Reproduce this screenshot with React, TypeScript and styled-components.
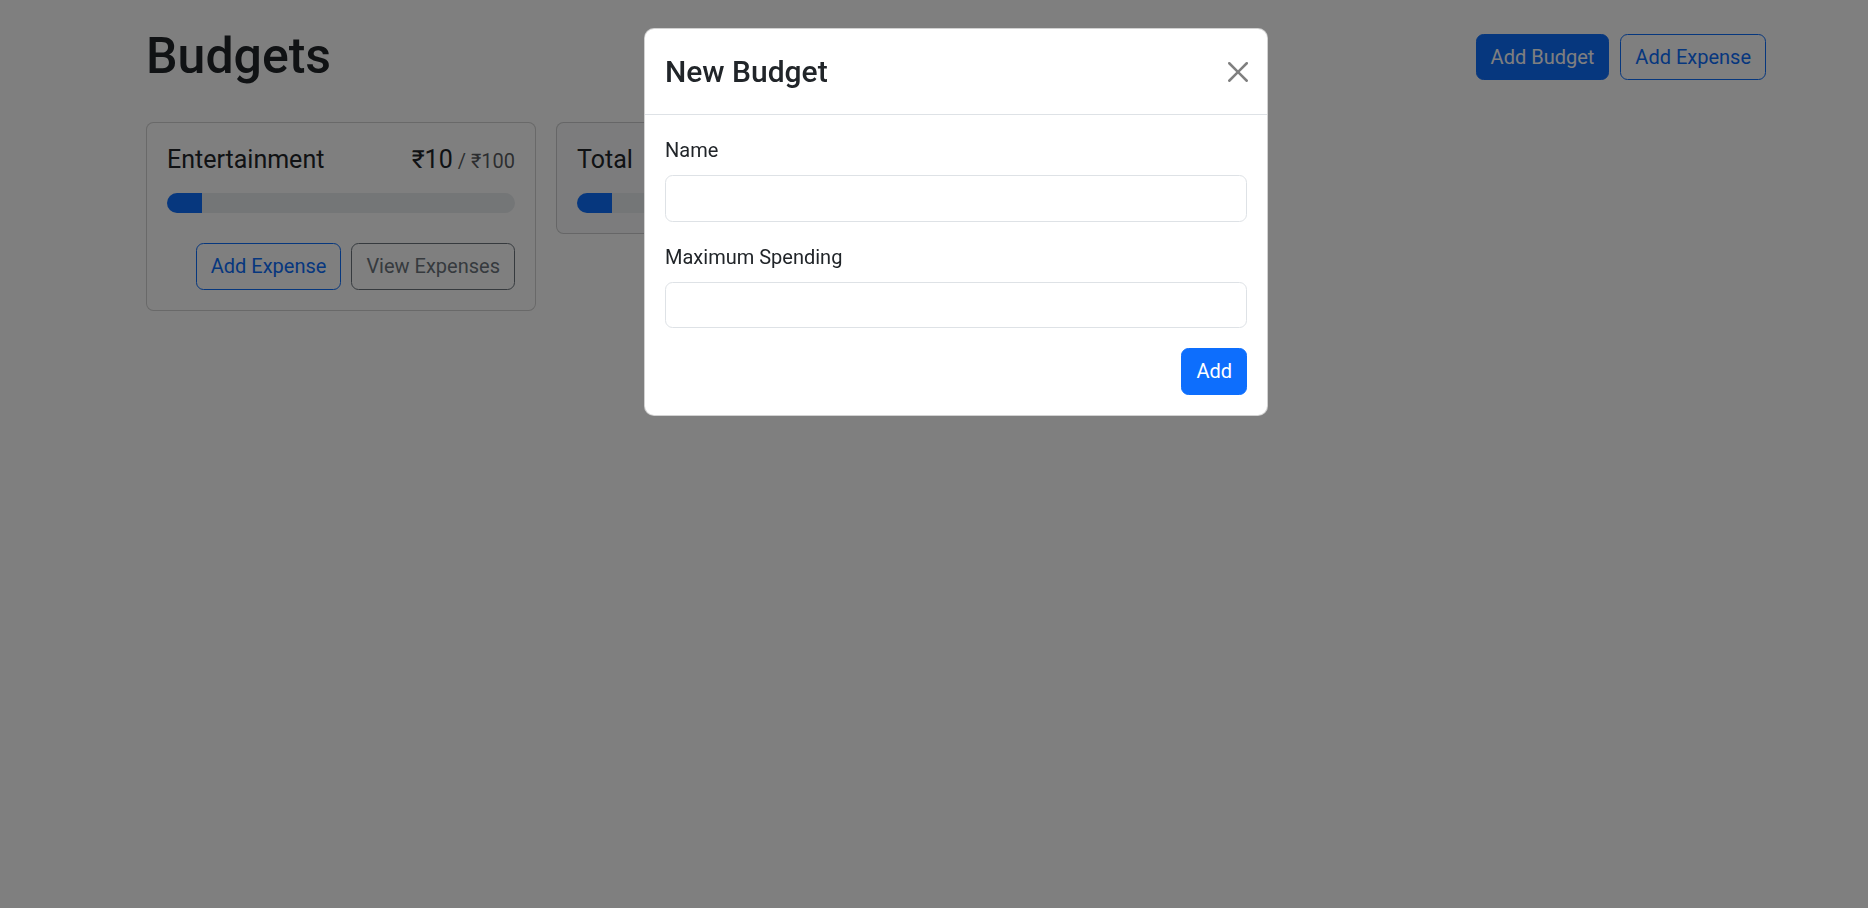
import React from "react";
import styled, { createGlobalStyle } from "styled-components";

const FONT = `Roboto, "Segoe UI", "DejaVu Sans", sans-serif`;

const GlobalStyle = createGlobalStyle`
  html, body { margin: 0; padding: 0; }
  body {
    background: #fff;
    font-family: ${FONT};
    color: #212529;
    font-size: 20px;
    line-height: 1.5;
  }
  *, *::before, *::after { box-sizing: border-box; }
`;

const Page = styled.div`
  width: 1620px;
  margin-left: 146px;
  padding-top: 22px;
`;

const Header = styled.div`
  display: flex;
  align-items: center;
  gap: 11px;
  margin-bottom: 30px;
`;

const Title = styled.h1`
  margin: 0 auto 6px 0;
  padding-top: 4px;
  font-size: 50px;
  line-height: 60px;
  font-weight: 500;
  color: #212529;
`;

type Variant = "primary" | "outline-primary" | "outline-secondary";

const Button = styled.button<{ $variant: Variant; $push?: boolean }>`
  font-family: ${FONT};
  font-size: 20px;
  line-height: 1.5;
  height: 46.5px;
  padding: 0 14px;
  border-radius: 7.5px;
  border: 1px solid
    ${(p) => (p.$variant === "outline-secondary" ? "#6c757d" : "#0d6efd")};
  background: ${(p) => (p.$variant === "primary" ? "#0d6efd" : "transparent")};
  color: ${(p) =>
    p.$variant === "primary"
      ? "#fff"
      : p.$variant === "outline-primary"
      ? "#0d6efd"
      : "#6c757d"};
  margin-left: ${(p) => (p.$push ? "auto" : "0")};
  cursor: pointer;
  white-space: nowrap;
`;

const CardGrid = styled.div`
  display: grid;
  grid-template-columns: repeat(4, 1fr);
  gap: 20px;
  align-items: start;
`;

const Card = styled.div<{ $gray?: boolean }>`
  border: 1px solid rgba(0, 0, 0, 0.175);
  border-radius: 7.5px;
  padding: 20px;
  background: ${(p) => (p.$gray ? "#f8f9fa" : "#fff")};
`;

const CardTitle = styled.div`
  display: flex;
  justify-content: space-between;
  align-items: baseline;
  height: 32px;
  padding-top: 2px;
  font-size: 25px;
  line-height: 30px;
  margin-bottom: 18px;
`;

const Amount = styled.div`
  display: flex;
  align-items: baseline;
`;

const Muted = styled.span`
  font-size: 20px;
  color: rgba(33, 37, 41, 0.75);
  margin-left: 5px;
`;

const Progress = styled.div`
  height: 20px;
  border-radius: 999px;
  background: #e9ecef;
  overflow: hidden;
  display: flex;
`;

const ProgressFill = styled.div`
  background: #0d6efd;
  height: 100%;
`;

const CardActions = styled.div`
  display: flex;
  gap: 10px;
  margin-top: 30px;
`;

const Backdrop = styled.div`
  position: fixed;
  inset: 0;
  background: rgba(0, 0, 0, 0.5);
  z-index: 10;
`;

const ModalLayer = styled.div`
  position: fixed;
  inset: 0;
  z-index: 20;
  display: flex;
  align-items: flex-start;
`;

const Dialog = styled.div`
  width: 624px;
  margin: 28px 0 0 644px;
  background: #fff;
  border: 1px solid rgba(0, 0, 0, 0.175);
  border-radius: 10px;
`;

const ModalHeader = styled.div`
  display: flex;
  align-items: center;
  justify-content: space-between;
  padding: 20px;
  border-bottom: 1px solid #dee2e6;
`;

const ModalTitle = styled.h4`
  margin: 0;
  font-size: 30px;
  line-height: 45px;
  font-weight: 500;
`;

const CloseButton = styled.button`
  width: 20px;
  height: 20px;
  padding: 0;
  margin-right: -1px;
  border: 0;
  background: transparent;
  display: flex;
  cursor: pointer;
  svg { width: 20px; height: 20px; }
`;

const ModalBody = styled.div`
  padding: 20px;
`;

const Group = styled.div`
  margin-bottom: 20px;
`;

const Label = styled.label`
  display: block;
  margin-bottom: 10px;
  font-size: 20px;
  line-height: 30px;
  color: #212529;
`;

const Input = styled.input`
  display: block;
  width: 100%;
  height: 46.5px;
  padding: 0 15px;
  font-family: ${FONT};
  font-size: 20px;
  border: 1px solid #dee2e6;
  border-radius: 7.5px;
  background: #fff;
  outline: none;
`;

const Footer = styled.div`
  display: flex;
  justify-content: flex-end;
`;

const X = () => (
  <svg viewBox="0 0 16 16" aria-hidden="true">
    <path
      fill="rgba(0,0,0,0.5)"
      d="M.293.293a1 1 0 0 1 1.414 0L8 6.586 14.293.293a1 1 0 1 1 1.414 1.414L9.414 8l6.293 6.293a1 1 0 0 1-1.414 1.414L8 9.414l-6.293 6.293a1 1 0 0 1-1.414-1.414L6.586 8 .293 1.707a1 1 0 0 1 0-1.414z"
    />
  </svg>
);

function BudgetCard({
  name,
  amount,
  max,
  gray,
  hideButtons,
}: {
  name: string;
  amount: number;
  max: number;
  gray?: boolean;
  hideButtons?: boolean;
}) {
  return (
    <Card $gray={gray}>
      <CardTitle>
        <div>{name}</div>
        <Amount>
          ₹{amount}
          <Muted>/ ₹{max}</Muted>
        </Amount>
      </CardTitle>
      <Progress>
        <ProgressFill style={{ width: `${(amount / max) * 100}%` }} />
      </Progress>
      {!hideButtons && (
        <CardActions>
          <Button $variant="outline-primary" $push>
            Add Expense
          </Button>
          <Button $variant="outline-secondary">View Expenses</Button>
        </CardActions>
      )}
    </Card>
  );
}

export default function App() {
  return (
    <>
      <GlobalStyle />
      <Page>
        <Header>
          <Title>Budgets</Title>
          <Button $variant="primary">Add Budget</Button>
          <Button $variant="outline-primary">Add Expense</Button>
        </Header>
        <CardGrid>
          <BudgetCard name="Entertainment" amount={10} max={100} />
          <BudgetCard name="Total" amount={10} max={100} gray hideButtons />
        </CardGrid>
      </Page>
      <Backdrop />
      <ModalLayer>
        <Dialog>
          <ModalHeader>
            <ModalTitle>New Budget</ModalTitle>
            <CloseButton aria-label="Close">
              <X />
            </CloseButton>
          </ModalHeader>
          <ModalBody>
            <Group>
              <Label>Name</Label>
              <Input type="text" />
            </Group>
            <Group>
              <Label>Maximum Spending</Label>
              <Input type="number" />
            </Group>
            <Footer>
              <Button $variant="primary">Add</Button>
            </Footer>
          </ModalBody>
        </Dialog>
      </ModalLayer>
    </>
  );
}
